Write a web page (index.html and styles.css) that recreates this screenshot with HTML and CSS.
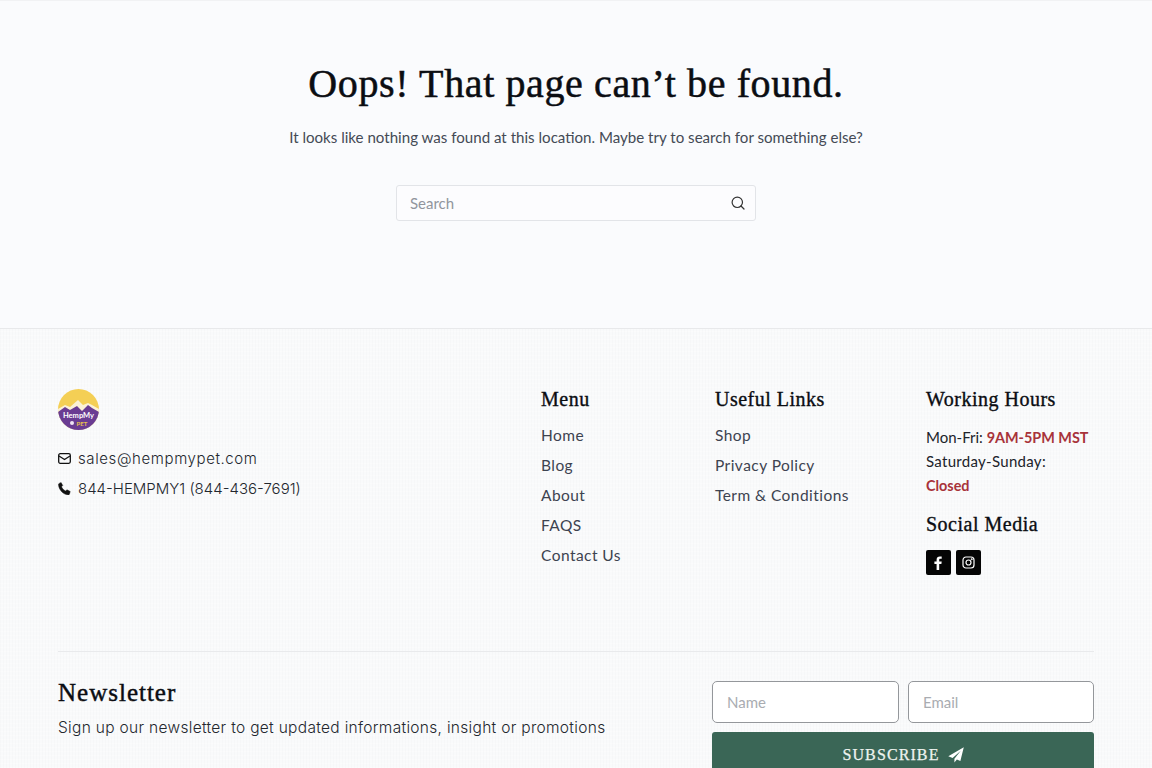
FILE: index.html
```html
<!DOCTYPE html>
<html lang="en">
<head>
    <meta charset="UTF-8">
    <meta name="viewport" content="width=device-width, initial-scale=1.0">
    <title>Page not found</title>
    <link rel="stylesheet" href="styles.css">
</head>
<body>
    <main class="not-found">
        <h1>Oops! That page can’t be found.</h1>
        <p>It looks like nothing was found at this location. Maybe try to search for something else?</p>
        <form class="search-form">
            <input type="text" placeholder="Search">
            <svg class="search-icon" width="14" height="14" viewBox="0 0 14 14" fill="none" stroke="#333" stroke-width="1.2" stroke-linecap="round">
                <circle cx="6.3" cy="6.3" r="5.2"/>
                <path d="M10 10l3 3"/>
            </svg>
        </form>
    </main>

    <footer class="site-footer">
        <div class="footer-top">
            <div class="footer-brand">
                <svg class="logo" width="41" height="41" viewBox="0 0 41 41">
                    <defs>
                        <clipPath id="logoClip"><circle cx="20.5" cy="20.5" r="20.5"/></clipPath>
                    </defs>
                    <g clip-path="url(#logoClip)">
                        <rect width="41" height="41" fill="#f4cf55"/>
                        <path d="M0 20l7-4 5 2 8-7 5 5 5-2 4 2 7 4v21H0z" fill="#fbf1d6"/>
                        <path d="M0 23l7-5 5 3 7-4 5 5 6-6 4 3 7 4v18H0z" fill="#6a3c92"/>
                        <text x="20.5" y="29" class="logo-text" text-anchor="middle">HempMy</text>
                        <circle cx="14" cy="34" r="2" fill="#f1e6f5"/>
                        <text x="24" y="36.500" class="logo-pet" text-anchor="middle">PET</text>
                    </g>
                </svg>
                <ul class="contact-list">
                    <li class="contact-email">
                        <svg width="13" height="11" viewBox="0 0 13 11" fill="none" stroke="#111" stroke-width="1.3" stroke-linejoin="round">
                            <rect x="0.7" y="0.7" width="11.6" height="9.6" rx="1.5"/>
                            <path d="M1 3l5.5 3.5L12 3"/>
                        </svg>
                        sales@hempmypet.com
                    </li>
                    <li class="contact-phone">
                        <svg width="13" height="13" viewBox="0 0 13 13">
                            <path d="M3.1.6l1.6 2.9-1.2 1.3c.7 1.8 2.3 3.4 4.2 4.2l1.3-1.2 3.2 1.7-.8 2.7c-.2.5-.6.7-1.1.7C5 12.600.7 7.400.5 2.500c0-.5.2-.9.7-1.100z" fill="#111" stroke="#111" stroke-width=".5"/>
                        </svg>
                        844-HEMPMY1 (844-436-7691)
                    </li>
                </ul>
            </div>

            <div class="footer-col">
                <h3>Menu</h3>
                <ul class="link-list">
                    <li>Home</li>
                    <li>Blog</li>
                    <li>About</li>
                    <li>FAQS</li>
                    <li>Contact Us</li>
                </ul>
            </div>

            <div class="footer-col">
                <h3>Useful Links</h3>
                <ul class="link-list">
                    <li>Shop</li>
                    <li>Privacy Policy</li>
                    <li>Term &amp; Conditions</li>
                </ul>
            </div>

            <div class="footer-col">
                <h3>Working Hours</h3>
                <div class="hours">
                    <div>Mon-Fri: <strong>9AM-5PM MST</strong></div>
                    <div class="hours-days">Saturday-Sunday:</div>
                    <div><strong>Closed</strong></div>
                </div>
                <h3 class="social-title">Social Media</h3>
                <div class="social">
                    <span class="social-btn">
                        <svg width="9" height="14" viewBox="0 0 9 14"><path d="M2.600 14V7.900H.4V5.500h2.200V3.700C2.600 1.500 3.900.4 5.800.4c.9 0 1.700.1 1.900.1v2.200H6.400c-1 0-1.200.5-1.200 1.200v1.600h2.500l-.3 2.400H5.200V14z" fill="#fff"/></svg>
                    </span>
                    <span class="social-btn">
                        <svg width="13" height="13" viewBox="0 0 13 13" fill="none" stroke="#fff" stroke-width="1.200">
                            <rect x="1" y="1" width="11" height="11" rx="3"/>
                            <circle cx="6.500" cy="6.500" r="2.500"/>
                            <circle cx="9.700" cy="3.300" r=".4"/>
                        </svg>
                    </span>
                </div>
            </div>
        </div>

        <div class="newsletter">
            <div class="newsletter-text">
                <h2>Newsletter</h2>
                <p>Sign up our newsletter to get updated informations, insight or promotions</p>
            </div>
            <form class="newsletter-form">
                <input type="text" placeholder="Name">
                <input type="text" placeholder="Email">
                <button type="button">
                    SUBSCRIBE
                    <svg width="16" height="16" viewBox="0 0 15 15"><path d="M14.800.2L.3 8.600l4 1.600L12 3.400 6 11v3.600l2.300-2.900 3.300 1.400z" fill="#fff"/></svg>
                </button>
            </form>
        </div>
    </footer>
</body>
</html>
```

FILE: styles.css
```css
* {
    box-sizing: border-box;
}
html, body {
    height: 768px;
    overflow: hidden;
}
body {
    margin: 0;
    background: #fafbfd;
    color: #3d4350;
    font-family: 'Lato', 'Noto Sans', sans-serif;
    font-size: 15px;
}
ul {
    list-style: none;
    margin: 0;
    padding: 0;
}
h1, h2, h3 {
    font-family: 'Liberation Serif', serif;
    color: #0b0d12;
    margin: 0;
}
.not-found {
    height: 329px;
    padding-top: 59px;
    text-align: center;
    border-top: 1px solid #f1f2f4;
    border-bottom: 1px solid #e8e9eb;
}
.not-found h1 {
    font-size: 40px;
    line-height: 48px;
    font-weight: 400;
    letter-spacing: 0.62px;
    -webkit-text-stroke: 0.5px #0b0d12;
}
.not-found p {
    margin: 18px 0 0;
    font-size: 15.1px;
    line-height: 22px;
    color: #444a55;
}
.search-form {
    position: relative;
    width: 360px;
    height: 36px;
    margin: 37px auto 0;
}
.search-form input {
    width: 100%;
    height: 100%;
    padding: 0 40px 0 13px;
    background: #fcfcfe;
    border: 1px solid #e2e4e8;
    border-radius: 3px;
    font: inherit;
}
.search-form input::placeholder {
    color: #91959d;
}
.search-icon {
    position: absolute;
    top: 11px;
    right: 11px;
}
.site-footer {
    height: 439px;
    padding: 60px 58px 0;
    background-color: #f9fafb;
    background-image:
        repeating-linear-gradient(90deg, rgba(0,0,0,0.012) 0 1px, transparent 1px 3px),
        repeating-linear-gradient(0deg, rgba(255,255,255,0.3) 0 1px, transparent 1px 4px);
}
.footer-top {
    display: grid;
    grid-template-columns: 483px 174px 211px 168px;
    height: 263px;
    border-bottom: 1px solid #e9eaec;
}
.logo {
    display: block;
}
.logo-text {
    font-family: 'Lato', sans-serif;
    font-size: 7.500px;
    font-weight: 700;
    fill: #fff;
}
.logo-pet {
    font-family: 'Lato', sans-serif;
    font-size: 6px;
    font-weight: 700;
    fill: #e7c24b;
}
.contact-list {
    margin-top: 13px;
}
.contact-list li {
    display: flex;
    align-items: center;
    gap: 7px;
    height: 30px;
    font-family: 'Inter', sans-serif;
    font-size: 15px;
    font-weight: 300;
    color: #23272e;
}
.contact-email {
    letter-spacing: 0.6px;
}
.footer-col h3 {
    font-size: 20px;
    line-height: 20px;
    font-weight: 400;
    letter-spacing: 0.5px;
    -webkit-text-stroke: 0.35px #0b0d12;
}
.link-list {
    margin-top: 11px;
}
.link-list li {
    height: 30px;
    line-height: 30px;
    font-size: 15.500px;
    letter-spacing: 0.45px;
    color: #3d4350;
}
.hours {
    margin-top: 16px;
    font-size: 15px;
    line-height: 24px;
    color: #20232a;
}
.hours strong {
    color: #a8333a;
    font-size: 14.400px;
    line-height: 1;
    font-weight: 700;
}
.hours-days {
    letter-spacing: 0.3px;
}
.footer-col .social-title {
    margin-top: 17px;
}
.social {
    display: flex;
    gap: 5px;
    margin-top: 16px;
}
.social-btn {
    display: flex;
    align-items: center;
    justify-content: center;
    width: 25px;
    height: 25px;
    background: #050505;
    border-radius: 2px;
}
.newsletter {
    display: flex;
    justify-content: space-between;
    padding-top: 29px;
}
.newsletter-text h2 {
    font-size: 25px;
    line-height: 24px;
    font-weight: 400;
    letter-spacing: 1px;
    -webkit-text-stroke: 0.45px #0b0d12;
}
.newsletter-text p {
    margin: 12px 0 0;
    font-family: 'Inter', sans-serif;
    font-size: 15.500px;
    font-weight: 300;
    letter-spacing: 0.31px;
    line-height: 22px;
    color: #23272e;
}
.newsletter-form {
    display: grid;
    grid-template-columns: 187px 186px;
    gap: 9px;
    width: 382px;
}
.newsletter-form input {
    height: 42px;
    padding: 0 14px;
    background: #fff;
    border: 1.5px solid #94979b;
    border-radius: 5px;
    font: inherit;
}
.newsletter-form input::placeholder {
    color: #a9acb1;
}
.newsletter-form button {
    grid-column: 1 / 3;
    display: flex;
    align-items: center;
    justify-content: center;
    gap: 8px;
    height: 46px;
    background: #3a6656;
    border: none;
    border-radius: 3px;
    color: #eef3ef;
    font-family: 'Liberation Serif', serif;
    font-size: 16px;
    letter-spacing: 1.1px;
    -webkit-text-stroke: 0.25px #eef3ef;
}
```
